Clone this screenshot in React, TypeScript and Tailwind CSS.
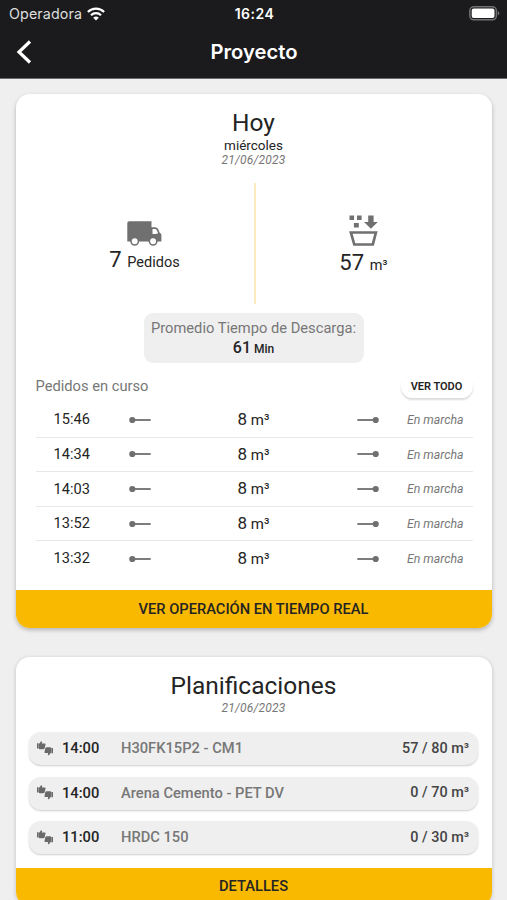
import React from 'react';

interface Order {
  time: string;
  volume: number;
  status: string;
}

interface Plan {
  time: string;
  product: string;
  progress: string;
}

const orders: Order[] = [
  { time: '15:46', volume: 8, status: 'En marcha' },
  { time: '14:34', volume: 8, status: 'En marcha' },
  { time: '14:03', volume: 8, status: 'En marcha' },
  { time: '13:52', volume: 8, status: 'En marcha' },
  { time: '13:32', volume: 8, status: 'En marcha' },
];

const plans: Plan[] = [
  { time: '14:00', product: 'H30FK15P2 - CM1', progress: '57 / 80 m³' },
  { time: '14:00', product: 'Arena Cemento - PET DV', progress: '0 / 70 m³' },
  { time: '11:00', product: 'HRDC 150', progress: '0 / 30 m³' },
];

const WifiIcon = () => (
  <svg width="18" height="14" viewBox="0 0 18 14" fill="none" stroke="#fff" strokeWidth="2.2">
    <path d="M0.9 5a11.5 11.5 0 0 1 16.2 0" />
    <path d="M4 8.3a7 7 0 0 1 10 0" />
    <path d="M9 13.6 6.2 10.8a4 4 0 0 1 5.6 0Z" fill="#fff" stroke="none" />
  </svg>
);

const BatteryIcon = () => (
  <svg width="31" height="15" viewBox="0 0 31 15">
    <rect x="0.8" y="0.8" width="26.6" height="13" rx="4" fill="none" stroke="#717073" strokeWidth="1.5" />
    <rect x="2.7" y="2.6" width="22.8" height="9.4" rx="2" fill="#fff" />
    <path d="M28.8 5v4.6q1.6-.8 1.6-2.3T28.8 5Z" fill="#717073" />
  </svg>
);

const TruckIcon = () => (
  <svg width="35" height="25" viewBox="0 0 35 25" fill="#707070">
    <path d="M2.2 0.2h22.3v6h3c2.5 0 3.5 1.2 4.3 3.2l.9 2.3c1.2.6 1.7 1.2 1.7 2.5v6.2H.3V2.1Q.3.2 2.2.2Z" />
    <path d="M25.5 8.1h2c1.5 0 2.2.5 2.7 1.8l.9 2.4c-1 .4-1.8.6-2.9.6h-2.7Z" fill="#fff" />
    <circle cx="7.7" cy="20.3" r="3.7" fill="#fff" stroke="#707070" strokeWidth="1.5" />
    <circle cx="26.1" cy="20.3" r="3.7" fill="#fff" stroke="#707070" strokeWidth="1.5" />
  </svg>
);

const UnloadIcon = () => (
  <svg width="30" height="32" viewBox="0 0 30 32" fill="#707070">
    <path d="M0.5 0.5h4.6v4.6H0.5zM8 0.5h4.6v4.6H8zM4.9 8h4.9v4.6H4.9z" />
    <path d="M19.2 0.5h5.4v6.6h4.2L21.9 13.8 15 7.1h4.2Z" />
    <path d="M1.9 17.5h25l-3.1 12H5.3Z" fill="none" stroke="#707070" strokeWidth="2.7" />
  </svg>
);

const ThumbsIcon = () => (
  <svg width="16" height="16" viewBox="0 0 16 16" fill="#696969">
    <path d="M0 2.3h1.6v5.2H0zM1.9 3 4.1.3c.9.1 1.2.8 1 1.400L4.800 2.600h2.900c.6 0 .9.500.8 1l-.8 3.700c-.2.700-.7 1-1.400 1H3c-.7 0-1.100-.3-1.100-1Z" />
    <path d="M16 12.300h-1.600V7.100H16zM14.100 11.600l-2.200 2.700c-.9-.1-1.200-.8-1-1.400l.3-.9H8.300c-.6 0-.9-.5-.8-1l.8-3.700c.2-.7.7-1 1.400-1H13c.7 0 1.100.3 1.100 1Z" />
  </svg>
);

const RouteIcon = ({ end = false }: { end?: boolean }) => (
  <svg width="22" height="8" viewBox="0 0 22 8" fill="#6f6f6f" className={end ? 'rotate-180' : ''}>
    <circle cx="3.3" cy="4" r="3.1" />
    <rect x="3" y="3.1" width="18.7" height="1.8" />
  </svg>
);

const Header = () => (
  <header className="h-[79px] shrink-0 border-b border-[#6b6b6d] bg-[#1b1a1d] text-white">
    <div className="grid h-7 grid-cols-3 items-center pr-[7px] pl-[9px] font-['Inter'] text-sm">
      <div className="flex items-center gap-[5px] text-[#dededf]">
        <span className="text-[14.3px] tracking-[0.1px]">Operadora</span>
        <WifiIcon />
      </div>
      <span className="text-center font-semibold tracking-[0.5px]">16:24</span>
      <div className="-mt-[2px] flex justify-end">
        <BatteryIcon />
      </div>
    </div>
    <div className="grid h-12 grid-cols-[40px_1fr_40px] items-center px-4">
      <svg width="16" height="24" viewBox="0 0 16 24" fill="none" stroke="#fff" strokeWidth="3.2">
        <path d="M14 1.5 3 12l11 10.5" />
      </svg>
      <h1 className="pt-px pl-px text-center font-['Inter'] text-[20.2px] font-semibold">Proyecto</h1>
    </div>
  </header>
);

const TodayCard = () => (
  <section className="h-[534px] shrink-0 overflow-hidden rounded-[14px] bg-white shadow-[0_2px_4px_rgba(0,0,0,0.25)]">
    <div className="flex h-[89px] flex-col items-center pt-[14px]">
      <h2 className="text-[24.5px] leading-[30px]">Hoy</h2>
      <p className="text-[13.5px] leading-[14px]">miércoles</p>
      <p className="pt-px text-[12px] leading-[15px] tracking-[0.2px] text-[#777] italic">21/06/2023</p>
    </div>
    <div className="flex h-[121px]">
      <div className="flex w-[238px] flex-col items-center pt-[38px] pl-[20px]">
        <TruckIcon />
        <p className="text-[14.5px] leading-[28px]">
          <span className="mr-[2px] text-[22px]">7</span> Pedidos
        </p>
      </div>
      <div className="w-[2px] bg-[#fcebbd]" />
      <div className="flex flex-1 flex-col items-center pt-[32px] pr-[20px]">
        <UnloadIcon />
        <p className="text-[14.5px] leading-[31px]">
          <span className="mr-[2px] text-[22px]">57</span> m³
        </p>
      </div>
    </div>
    <div className="mx-auto mt-[9px] flex h-[50px] w-[220px] flex-col items-center rounded-[9px] bg-[#efefef] pt-[5px]">
      <p className="text-[14.7px] leading-[20px] text-[#777]">Promedio Tiempo de Descarga:</p>
      <p className="text-[12px] leading-[20px] font-medium">
        <span className="text-[16px]">61</span> Min
      </p>
    </div>
    <div className="mr-[19px] ml-[20px] flex h-[40px] items-center justify-between pt-[7px]">
      <span className="text-[14.7px] text-[#777]">Pedidos en curso</span>
      <button className="h-[23px] w-[72px] rounded-[12px] bg-white pt-[2px] text-[11px] font-semibold shadow-[0_2px_2px_rgba(0,0,0,0.14)]">
        VER TODO
      </button>
    </div>
    <ul className="mr-[19px] ml-[20px] h-[187px] divide-y divide-[#e8e8e8]">
      {orders.map((order) => (
        <li key={order.time} className="flex h-[34.6px] items-center">
          <span className="w-[93px] pt-px pl-[18px] text-[14.6px]">{order.time}</span>
          <RouteIcon />
          <span className="flex-1 text-center text-[15px]">
            <span className="text-[17px]">{order.volume}</span> m³
          </span>
          <RouteIcon end />
          <span className="w-[94px] pt-px pr-[9px] text-right text-[12.3px] text-[#777] italic">{order.status}</span>
        </li>
      ))}
    </ul>
    <button className="h-[38px] w-full bg-[#f9b900] text-[14.7px] font-medium">VER OPERACIÓN EN TIEMPO REAL</button>
  </section>
);

const PlansCard = () => (
  <section className="h-[249px] shrink-0 overflow-hidden rounded-[14px] bg-white shadow-[0_1px_4px_rgba(0,0,0,0.2)]">
    <div className="flex h-[75px] flex-col items-center pt-[14px]">
      <h2 className="text-[24.5px] leading-[30px]">Planificaciones</h2>
      <p className="text-[12px] leading-[14px] tracking-[0.2px] text-[#777] italic">21/06/2023</p>
    </div>
    <ul className="flex h-[135.5px] flex-col gap-[11.5px] px-[13.5px]">
      {plans.map((plan) => (
        <li
          key={plan.product}
          className="flex h-[33px] items-center rounded-[12px] bg-[#efefef] pr-[9px] pl-[8px] text-[14.7px] font-medium shadow-[0_1px_2px_rgba(0,0,0,0.2)]"
        >
          <ThumbsIcon />
          <span className="w-[68px] pl-[9px]">{plan.time}</span>
          <span className="flex-1 text-[#777]">{plan.product}</span>
          <span className="text-[14.4px] text-[#444]">{plan.progress}</span>
        </li>
      ))}
    </ul>
    <button className="h-[38px] w-full bg-[#f9b900] pb-px text-[14.7px] font-medium">DETALLES</button>
  </section>
);

const App: React.FC = () => {
  return (
    <div className="flex h-[900px] w-[507px] flex-col overflow-hidden bg-[#efefef] font-['Roboto',sans-serif] text-[#242424]">
      <Header />
      <main className="flex min-h-0 flex-1 flex-col gap-[29px] overflow-hidden px-[15.5px] pt-[15px]">
        <TodayCard />
        <PlansCard />
      </main>
    </div>
  );
};

export default App;
